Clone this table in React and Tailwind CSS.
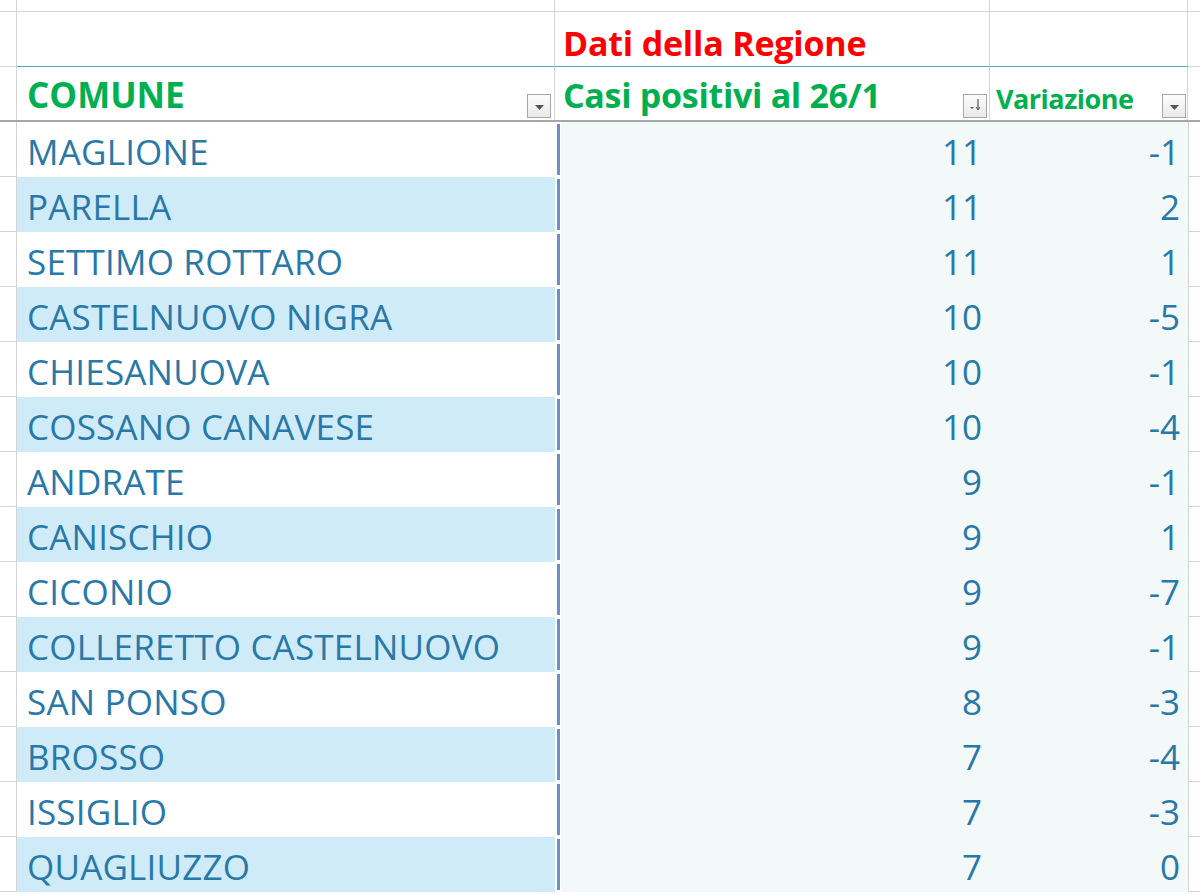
import React from 'react';

const rows = [
  ['MAGLIONE', 11, -1],
  ['PARELLA', 11, 2],
  ['SETTIMO ROTTARO', 11, 1],
  ['CASTELNUOVO NIGRA', 10, -5],
  ['CHIESANUOVA', 10, -1],
  ['COSSANO CANAVESE', 10, -4],
  ['ANDRATE', 9, -1],
  ['CANISCHIO', 9, 1],
  ['CICONIO', 9, -7],
  ['COLLERETTO CASTELNUOVO', 9, -1],
  ['SAN PONSO', 8, -3],
  ['BROSSO', 7, -4],
  ['ISSIGLIO', 7, -3],
  ['QUAGLIUZZO', 7, 0],
];

const FilterButton = ({ sort }) => (
  <div className="w-[24px] h-[24px] border border-[#a6a6a6] bg-gradient-to-b from-[#fdfdfd] to-[#e9e9e9] flex items-end justify-center pb-[6px] shrink-0">
    {sort ? (
      <svg width="14" height="13" viewBox="0 0 14 13">
        <path d="M2 9 L6 9 L4 11 Z" fill="#555" />
        <path d="M10 1 L10 11" stroke="#555" strokeWidth="1.2" />
        <path d="M8 9 L10 12 L12 9" fill="none" stroke="#555" strokeWidth="1" />
      </svg>
    ) : (
      <svg width="11" height="7" viewBox="0 0 11 7">
        <path d="M1 1 L10 1 L5.5 6 Z" fill="#555" />
      </svg>
    )}
  </div>
);

export default function App() {
  return (
    <div className="w-[1200px] h-[895px] overflow-hidden bg-white" style={{ fontFamily: '"Open Sans", "Noto Sans", sans-serif' }}>
      {/* top partial row */}
      <div className="grid grid-cols-[17px_538px_435px_198px_12px] h-[12px] border-b border-[#d4d4d4]">
        <div className="border-r border-[#d4d4d4]" />
        <div className="border-r border-[#d4d4d4]" />
        <div className="border-r border-[#d4d4d4]" />
        <div className="border-r border-[#d4d4d4]" />
        <div />
      </div>

      {/* title row */}
      <div className="grid grid-cols-[17px_538px_435px_198px_12px] h-[55px]">
        <div className="border-r border-b border-[#d4d4d4]" />
        <div className="border-r border-[#d4d4d4] border-b border-b-[#4bacc6]" />
        <div className="border-r border-[#d4d4d4] border-b border-b-[#4bacc6] flex items-end pl-[8px] pb-[6px]">
          <span className="text-[#ff0000] font-bold text-[34px] leading-none tracking-[-0.2px]">Dati della Regione</span>
        </div>
        <div className="border-r border-[#d4d4d4] border-b border-b-[#4bacc6]" />
        <div className="border-b border-[#d4d4d4]" />
      </div>

      {/* header row */}
      <div className="grid grid-cols-[17px_538px_435px_198px_12px] h-[55px] border-b-2 border-[#a6a6a6]">
        <div className="border-r border-[#d4d4d4]" />
        <div className="border-r border-[#d4d4d4] flex items-end justify-between pl-[10px] pr-[3px] pb-[2px]">
          <span className="text-[#00b050] font-bold text-[35px] leading-none mb-[6px]">COMUNE</span>
          <FilterButton />
        </div>
        <div className="border-r border-[#d4d4d4] flex items-end justify-between pl-[8px] pr-[2px] pb-[2px]">
          <span className="text-[#00b050] font-bold text-[34px] leading-none tracking-[-0.3px] mb-[6px]">Casi positivi al 26/1</span>
          <FilterButton sort />
        </div>
        <div className="border-r border-[#d4d4d4] flex items-end justify-between pl-[6px] pr-[1px] pb-[2px]">
          <span className="text-[#00b050] font-bold text-[27px] leading-none tracking-[-0.5px] mb-[6px]">Variazione</span>
          <FilterButton />
        </div>
        <div />
      </div>

      {/* data rows */}
      {rows.map(([name, casi, vari], i) => (
        <div key={name} className="grid grid-cols-[17px_538px_435px_198px_12px] h-[55px]">
          <div className="border-r border-b border-[#d4d4d4]" />
          <div className={`flex items-end pl-[10px] pb-[8px] ${i % 2 === 1 ? 'bg-[#d0ebf8]' : 'bg-white'}`}>
            <span className="text-[#2878a8] text-[35px] leading-none tracking-[0.2px]">{name}</span>
          </div>
          <div className="flex bg-[#f3f8f8]">
            <div className="w-[6px] bg-white flex justify-center py-[2px]">
              <div className="w-[3px] bg-[#6e8fc6]" />
            </div>
            <div className="flex-1 flex items-end justify-end pr-[8px] pb-[8px]">
              <span className="text-[#2878a8] text-[35px] leading-none">{casi}</span>
            </div>
          </div>
          <div className="flex items-end justify-end bg-[#f3f8f8] pr-[8px] pb-[8px]">
            <span className="text-[#2878a8] text-[35px] leading-none">{vari}</span>
          </div>
          <div className="border-l border-b border-[#d4d4d4]" />
        </div>
      ))}
    </div>
  );
}
